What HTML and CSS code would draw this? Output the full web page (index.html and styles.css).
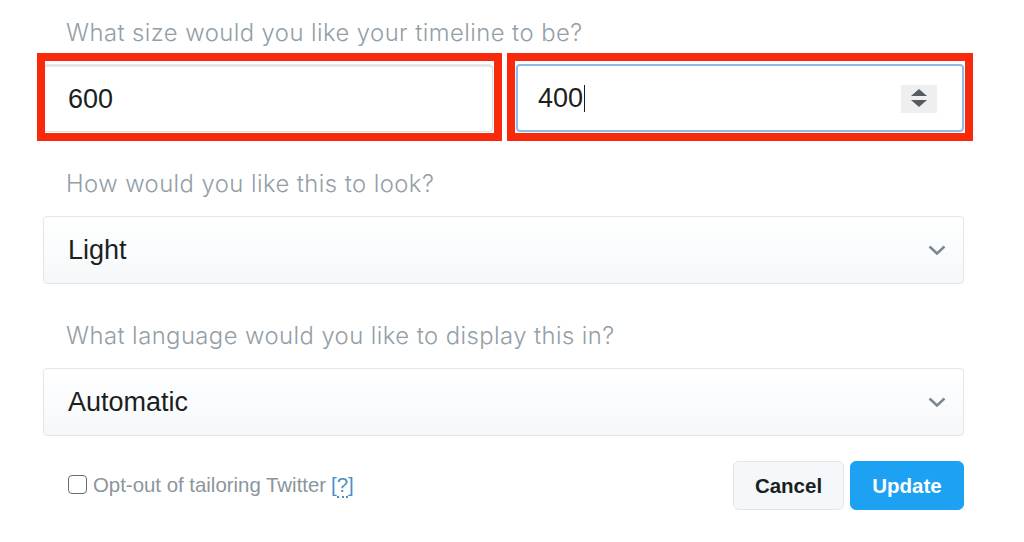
FILE: index.html
```html
<!DOCTYPE html>
<html>
<head>
<meta charset="utf-8">
<link rel="stylesheet" href="styles.css">
</head>
<body>
<div class="form">
  <div class="label">What size would you like your timeline to be?</div>
  <div class="size-row">
    <div class="field annotated first">
      <div class="input"><span class="value">600</span></div>
    </div>
    <div class="field annotated second">
      <div class="input focused"><span class="value">400</span><span class="caret"></span>
        <span class="stepper">
          <svg width="16" height="20" viewBox="0 0 16 20"><polygon points="8,0 16,7 0,7" fill="#555d63"/><polygon points="0,11 16,11 8,18" fill="#555d63"/></svg>
        </span>
      </div>
    </div>
  </div>

  <div class="label spaced">How would you like this to look?</div>
  <div class="select"><span class="value">Light</span>
    <svg class="chev" width="18" height="11" viewBox="0 0 18 11"><polyline points="1.5,1.5 9,8.5 16.5,1.5" fill="none" stroke="#7a8790" stroke-width="2.4"/></svg>
  </div>

  <div class="label spaced">What language would you like to display this in?</div>
  <div class="select"><span class="value">Automatic</span>
    <svg class="chev" width="18" height="11" viewBox="0 0 18 11"><polyline points="1.5,1.5 9,8.5 16.5,1.5" fill="none" stroke="#7a8790" stroke-width="2.4"/></svg>
  </div>

  <div class="footer">
    <label class="opt">
      <span class="box"></span>
      <span class="opt-text">Opt-out of tailoring Twitter</span>
      <span class="help">[<span class="q">?</span>]</span>
    </label>
    <div class="buttons">
      <button class="btn cancel">Cancel</button>
      <button class="btn update">Update</button>
    </div>
  </div>
</div>
</body>
</html>
```
FILE: styles.css
```css
html, body {
  margin: 0;
  padding: 0;
  background: #ffffff;
}
body {
  font-family: "Liberation Sans", Arial, sans-serif;
}
.form {
  width: 921px;
  padding: 18px 0 0 43px;
}
.label {
  font-family: Inter, "Liberation Sans", sans-serif;
  font-weight: 300;
  font-size: 23.8px;
  letter-spacing: 0.45px;
  line-height: 30px;
  color: #939ea7;
  padding-left: 23px;
  margin-bottom: 16px;
}
.label.spaced {
  margin-top: 37px;
  margin-bottom: 17px;
}
.size-row {
  display: grid;
  grid-template-columns: 450px 448px;
  column-gap: 23px;
}
.field {
  position: relative;
}
.annotated::after {
  content: "";
  position: absolute;
  border: 8px solid #f92a0c;
  pointer-events: none;
}
.annotated.first::after {
  left: -6px;
  right: -9px;
  top: -11px;
  bottom: -9px;
}
.annotated.second::after {
  left: -9px;
  right: -9px;
  top: -11px;
  bottom: -9px;
}
.input {
  height: 68px;
  box-sizing: border-box;
  border: 1px solid #d9dee2;
  border-top: 3px solid #e4e7ea;
  border-radius: 4px;
  background: #fff;
  display: flex;
  align-items: center;
  padding-left: 24px;
  padding-right: 25px;
  padding-top: 1px;
  font-size: 27px;
  color: #1c1f22;
}
.input.focused {
  border: 2px solid #8fbbea;
  padding-left: 20px;
}
.caret {
  width: 1px;
  height: 27px;
  background: #1c1f22;
  margin-left: 1px;
}
.stepper {
  margin-left: auto;
  width: 36px;
  height: 28px;
  background: #efefef;
  display: flex;
  align-items: center;
  justify-content: center;
}
.stepper svg {
  display: block;
}
.select {
  height: 68px;
  box-sizing: border-box;
  border: 1px solid #e1e6ea;
  border-radius: 4px;
  background: linear-gradient(#ffffff, #f5f8fa);
  display: flex;
  align-items: center;
  padding-left: 24px;
  padding-right: 17px;
  padding-top: 1px;
  font-size: 27px;
  color: #1c1f22;
}
.chev {
  margin-left: auto;
  display: block;
}
.footer {
  margin-top: 25px;
  height: 49px;
  display: flex;
  align-items: center;
  justify-content: space-between;
}
.opt {
  display: flex;
  align-items: center;
  padding-left: 25px;
  font-size: 20.4px;
  color: #8b959c;
}
.box {
  width: 17px;
  height: 17px;
  border: 1.5px solid #666d72;
  border-radius: 4px;
  margin-right: 6px;
  margin-top: -3px;
}
.help {
  margin-left: 5px;
  color: #4a90c8;
}
.q {
  border-bottom: 2px dotted #4a90c8;
}
.buttons {
  display: flex;
  gap: 6px;
}
.btn {
  font-family: "Liberation Sans", Arial, sans-serif;
  font-weight: bold;
  font-size: 20.5px;
  height: 49px;
  border-radius: 6px;
  cursor: pointer;
  padding: 0;
}
.cancel {
  width: 111px;
  background: #f5f8fa;
  border: 1px solid #e1e6ea;
  color: #1c1f22;
}
.update {
  width: 114px;
  background: #1da1f2;
  border: 1px solid #1da1f2;
  color: #ffffff;
}
```
